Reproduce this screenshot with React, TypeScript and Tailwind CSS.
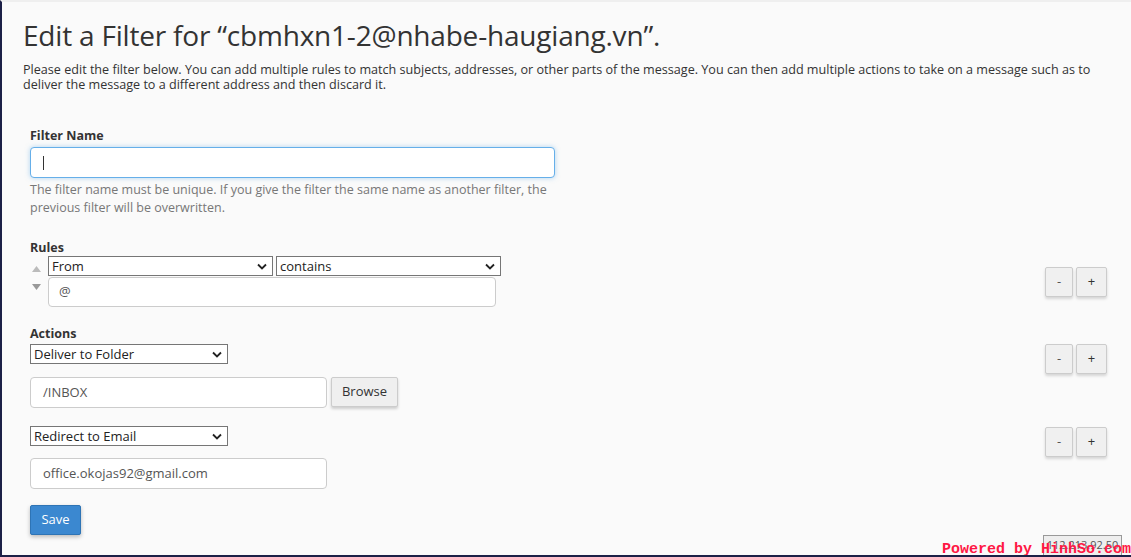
import React from 'react';

function Chevron() {
  return (
    <svg width="10" height="7" viewBox="0 0 10 7" className="shrink-0">
      <path d="M1 1.5 L5 5.5 L9 1.5" fill="none" stroke="#222" strokeWidth="1.8" />
    </svg>
  );
}

function FakeSelect({ value, width }: { value: string; width: string }) {
  return (
    <div className={`flex h-[20px] items-center justify-between border border-[#767676] bg-white pl-[3px] pr-[5px] text-[13px] text-[#222] ${width}`}>
      <span className="leading-none">{value}</span>
      <Chevron />
    </div>
  );
}

function TextBox({ value, width }: { value: string; width: string }) {
  return (
    <div className={`flex h-[31px] items-center rounded-[4px] border border-[#ccc] bg-white px-3 text-[13px] text-[#555] ${width}`}>
      {value}
    </div>
  );
}

function PlusMinus() {
  return (
    <div className="flex gap-[3px]">
      <button className="flex h-[30px] w-[28px] items-center justify-center rounded-[2px] border border-[#ccc] bg-[#f0f0f0] text-[13px] text-[#555] shadow-[0_2px_3px_rgba(0,0,0,0.15)]">
        -
      </button>
      <button className="flex h-[30px] w-[31px] items-center justify-center rounded-[2px] border border-[#ccc] bg-[#f0f0f0] text-[13px] text-[#333] shadow-[0_2px_3px_rgba(0,0,0,0.15)]">
        +
      </button>
    </div>
  );
}

export default function App() {
  return (
    <div
      className="relative h-[557px] w-full overflow-hidden border-b-2 border-l-2 border-t-2 border-b-[#1c2047] border-l-[#1c2047] border-t-[#efefef] bg-[#fafafa] text-[#333]"
      style={{ fontFamily: '"Open Sans", "Liberation Sans", sans-serif' }}
    >
      <div className="pl-[21px] pr-6">
        <h1 className="mt-[16px] text-[28px] leading-[34px] tracking-[-0.2px] text-[#333]">
          Edit a Filter for “cbmhxn1-2@nhabe-haugiang.vn”.
        </h1>
        <p className="mt-[10px] max-w-[1075px] text-[12.6px] leading-[15px] text-[#333]">
          Please edit the filter below. You can add multiple rules to match subjects, addresses, or other parts of the message. You can then add multiple actions to take on a message such as to deliver the message to a different address and then discard it.
        </p>

        <div className="mt-[35px] pl-[7px]">
          {/* filter name */}
          <div className="text-[12.5px] font-bold leading-[17px]">Filter Name</div>
          <div className="mt-[3px] flex h-[31px] w-[525px] items-center rounded-[4px] border border-[#66afe9] bg-white px-3 shadow-[0_0_5px_rgba(102,175,233,0.5)]">
            <span className="h-[14px] w-px bg-[#333]" />
          </div>
          <p className="mt-[3px] w-[540px] text-[12.5px] leading-[18px] text-[#777]">
            The filter name must be unique. If you give the filter the same name as another filter, the previous filter will be overwritten.
          </p>

          {/* rules */}
          <div className="mt-[22px] text-[12.5px] font-bold leading-[17px]">Rules</div>
          <div className="flex items-center justify-between">
            <div className="flex items-start">
              <div className="flex w-[18px] flex-col items-start gap-[12px] pt-[10px] pl-[2px]">
                <svg width="9" height="6" viewBox="0 0 9 6"><path d="M0 6 L4.5 0 L9 6 Z" fill="#bbb" /></svg>
                <svg width="9" height="6" viewBox="0 0 9 6"><path d="M0 0 L4.5 6 L9 0 Z" fill="#999" /></svg>
              </div>
              <div className="flex flex-col gap-px">
                <div className="flex gap-[3px]">
                  <FakeSelect value="From" width="w-[225px]" />
                  <FakeSelect value="contains" width="w-[225px]" />
                </div>
                <div className="flex h-[30px] w-[448px] items-center rounded-[4px] border border-[#ccc] bg-white pl-[10px] text-[13px] text-[#555]">
                  @
                </div>
              </div>
            </div>
            <PlusMinus />
          </div>

          {/* actions */}
          <div className="mt-[18px] text-[12.5px] font-bold leading-[17px]">Actions</div>
          <div className="mt-[2px] flex items-start justify-between">
            <div className="flex flex-col">
              <FakeSelect value="Deliver to Folder" width="w-[198px]" />
              <div className="mt-[13px] flex items-start gap-[4px]">
                <TextBox value="/INBOX" width="w-[297px]" />
                <button className="flex h-[30px] w-[67px] items-center justify-center rounded-[2px] border border-[#ccc] bg-[#efefef] text-[13px] text-[#333] shadow-[0_2px_3px_rgba(0,0,0,0.18)]">
                  Browse
                </button>
              </div>
            </div>
            <PlusMinus />
          </div>

          <div className="mt-[18px] flex items-start justify-between">
            <div className="flex flex-col">
              <FakeSelect value="Redirect to Email" width="w-[198px]" />
              <div className="mt-[12px]">
                <TextBox value="office.okojas92@gmail.com" width="w-[297px]" />
              </div>
            </div>
            <div className="mt-px">
              <PlusMinus />
            </div>
          </div>

          <button className="mt-[16px] flex h-[30px] w-[51px] items-center justify-center rounded-[2px] border border-[#2e74b5] bg-[#3b88d0] text-[13px] text-white shadow-[0_2px_4px_rgba(0,0,0,0.25)]">
            Save
          </button>
        </div>
      </div>

      {/* ip badge + watermark overlay */}
      <div className="absolute bottom-0 right-[9px] flex h-[20px] w-[79px] items-start justify-center border border-b-0 border-[#999] bg-[#eee] pt-[2px] text-[11px] leading-[14px] text-[#555]">
        112.213.92.50
      </div>
      <div
        className="absolute bottom-[-4px] right-0 text-[15px] font-bold leading-[18px] text-[#ff1744]"
        style={{ fontFamily: '"Liberation Mono", monospace' }}
      >
        Powered by HinhSo.com
      </div>
    </div>
  );
}
